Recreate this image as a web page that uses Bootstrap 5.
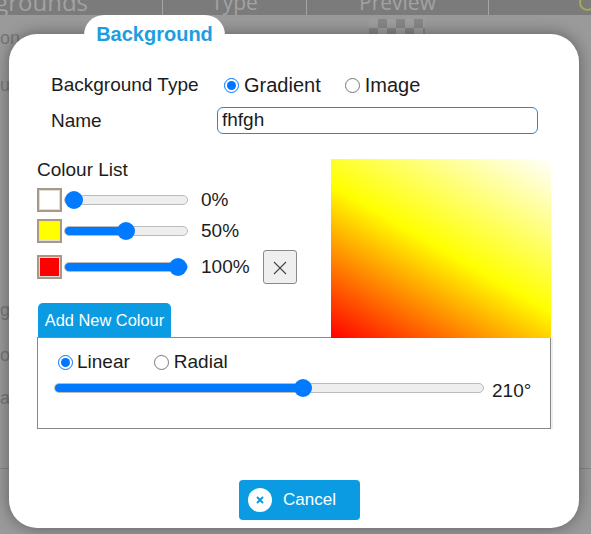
<!DOCTYPE html>
<html lang="en">
<head>
    <meta charset="UTF-8">
    <meta name="viewport" content="width=device-width, initial-scale=1.0">
    <title>Background</title>
    <link rel="stylesheet" href="https://cdn.jsdelivr.net/npm/bootstrap@5.3.0/dist/css/bootstrap.min.css">
    <style>
        html, body {
            height: 100%;
            overflow: hidden;
        }
        body {
            background-color: #9a9a9a;
            color: #1c1c1c;
            font-family: "Liberation Sans", Arial, sans-serif;
            font-size: 19px;
            line-height: 24px;
        }
        /* page behind the dialog */
        .behind-head {
            height: 15px;
            background: #7b7b7b;
            color: #a2a2a2;
            font-family: "Open Sans", sans-serif;
            font-size: 21px;
            overflow: hidden;
        }
        .behind-head > div {
            height: 15px;
            border-right: 1px solid #a5a5a5;
            text-align: center;
            line-height: 4px;
        }
        .behind-head > .head-a {
            width: 163px;
            padding-right: 74px;
            font-size: 24px;
            white-space: nowrap;
            display: flex;
            justify-content: flex-end;
        }
        .head-b { width: 144px; }
        .head-c { width: 182px; }
        .behind-text {
            color: #777;
            font-size: 18px;
            line-height: 18px;
            width: 9px;
            white-space: nowrap;
        }
        .gap-on { margin-top: 14px; }
        .gap-u { margin-top: 29px; }
        .gap-g { margin-top: 207px; }
        .gap-op { margin-top: 27px; }
        .gap-ac { margin-top: 25px; }
        .behind-line {
            position: absolute;
            left: 0;
            right: 0;
            top: 468px;
            border-top: 1px solid #858585;
        }
        .checks {
            position: absolute;
            left: 369px;
            top: 19px;
            width: 56px;
            height: 16px;
            background: repeating-conic-gradient(#878787 0 25%, #9f9f9f 0 50%) 0 0 / 18px 18px;
        }
        .plus-mark {
            position: absolute;
            left: 579px;
            top: -6px;
            width: 17px;
            height: 17px;
            border: 2px solid #a9a65a;
            border-radius: 50%;
        }
        /* dialog */
        .dlg {
            position: absolute;
            left: 9px;
            top: 34px;
            width: 570px;
            height: 494px;
            background: #fff;
            border-radius: 28px;
            box-shadow: 0 0 16px rgba(0, 0, 0, .4);
        }
        .dlg-tab {
            position: absolute;
            left: 75px;
            top: -19px;
            width: 141px;
            height: 40px;
            background: #fff;
            border-radius: 20px 20px 0 0;
            color: #1e9de0;
            font-size: 20px;
            font-weight: 700;
            line-height: 38px;
            text-align: center;
        }
        .dlg-body {
            padding: 36px 28px 0 28px;
        }
        .top-rows {
            padding-left: 14px;
            width: 501px;
        }
        .top-label {
            width: 166px;
            flex: none;
        }
        .type-row { height: 30px; margin-bottom: 7px; }
        .choice {
            display: inline-flex;
            align-items: center;
            margin: 0;
            line-height: 20px;
        }
        .choice input {
            width: 15px;
            height: 15px;
            margin: 0 5px 0 0;
        }
        .type-row .choice {
            font-size: 20px;
        }
        .type-row .choice:nth-child(2) {
            margin-left: 7px;
            margin-right: 24px;
        }
        .name-input.form-control {
            width: 321px;
            height: 27px;
            padding: 0 4px;
            border: 1px solid #1a8fd6;
            border-radius: 6px;
            font-size: 19px;
            color: #1c1c1c;
            box-shadow: none;
        }
        .mid-row {
            margin-top: 25px;
            height: 178px;
        }
        .colours { width: 294px; flex: none; }
        .list-title { line-height: 21px; margin-bottom: 4px; }
        .stop-row { height: 31px; }
        .stop-row.last { height: 34px; margin-top: 4px; }
        .swatch {
            width: 25px;
            height: 24px;
            flex: none;
            border: 2px solid #ab9786;
            box-shadow: inset 0 0 0 1px #ddd;
        }
        .range-x {
            -webkit-appearance: none;
            appearance: none;
            display: block;
            height: 18px;
            margin: 0;
            background: transparent;
        }
        .range-x::-webkit-slider-runnable-track {
            height: 10px;
            border-radius: 5px;
            border: 1px solid #bbb;
            background: linear-gradient(#007bff, #007bff) no-repeat 0 0 / var(--fill) 100%, #eee;
        }
        .range-x::-webkit-slider-thumb {
            -webkit-appearance: none;
            width: 18px;
            height: 18px;
            margin-top: -5px;
            border-radius: 50%;
            background: #007bff;
        }
        .stop-range { width: 124px; margin-left: 2px; flex: none; }
        .pct { margin-left: 13px; white-space: nowrap; }
        .del-btn.btn {
            width: 34px;
            height: 34px;
            padding: 0;
            margin-left: 13px;
            background: #efefef;
            border: 1px solid #8a8a8a;
            border-radius: 3px;
            line-height: 1;
        }
        .add-btn.btn {
            width: 133px;
            height: 34px;
            padding: 0;
            margin: 19px 0 0 1px;
            background: #0a9be3;
            border: 0;
            border-radius: 5px 5px 0 0;
            color: #fff;
            font-size: 16.4px;
            display: block;
        }
        .sample {
            width: 221px;
            height: 179px;
            background: linear-gradient(210deg, #fff 0%, #ff0 50%, #f00 100%);
        }
        .angle-box {
            width: 514px;
            height: 92px;
            padding: 14px 16px 0 16px;
            border: 1px solid #888;
            box-shadow: 2px 0 0 #eee;
        }
        .angle-box .choice { margin-right: 24px; }
        .angle-box .choice:first-child input { margin-left: 4px; margin-right: 4px; }
        .angle-range { width: 430px; flex: none; }
        .angle-row { margin-top: 7px; height: 26px; }
        .deg { margin-left: 8px; }
        .dlg-foot {
            position: absolute;
            left: 0;
            right: 0;
            bottom: 8px;
            padding-left: 11px;
        }
        .cancel-btn.btn {
            width: 121px;
            height: 40px;
            padding: 0 0 0 9px;
            background: #0a9be3;
            border: 0;
            border-radius: 4px;
            color: #fff;
            font-size: 17px;
            gap: 11px;
        }
        .cancel-dot {
            width: 24px;
            height: 24px;
            background: #fff;
            border-radius: 50%;
        }
    </style>
</head>
<body>
    <div class="behind-head d-flex">
        <div class="head-a">Backgrounds</div>
        <div class="head-b">Type</div>
        <div class="head-c">Preview</div>
    </div>
    <div class="behind-text">
        <div class="gap-on">on</div>
        <div class="gap-u">u</div>
        <div class="gap-g">g</div>
        <div class="gap-op">op</div>
        <div class="gap-ac">ac</div>
    </div>
    <div class="behind-line"></div>
    <div class="checks"></div>
    <div class="plus-mark"></div>

    <div class="dlg">
        <div class="dlg-tab">Background</div>
        <div class="dlg-body position-relative">
            <div class="top-rows">
                <div class="type-row d-flex align-items-center">
                    <div class="top-label">Background Type</div>
                    <label class="choice"><input type="radio" name="bgtype" checked>Gradient</label>
                    <label class="choice"><input type="radio" name="bgtype">Image</label>
                </div>
                <div class="d-flex align-items-center">
                    <div class="top-label">Name</div>
                    <input type="text" class="form-control name-input" value="fhfgh">
                </div>
            </div>

            <div class="mid-row d-flex">
                <div class="colours">
                    <div class="list-title">Colour List</div>
                    <div class="stop-row d-flex align-items-center">
                        <div class="swatch bg-white"></div>
                        <input type="range" class="range-x stop-range" value="0" style="--fill: 0%">
                        <span class="pct">0%</span>
                    </div>
                    <div class="stop-row d-flex align-items-center">
                        <div class="swatch" style="background: #ff0"></div>
                        <input type="range" class="range-x stop-range" value="50" style="--fill: 50%">
                        <span class="pct">50%</span>
                    </div>
                    <div class="stop-row last d-flex align-items-center">
                        <div class="swatch" style="background: #f00"></div>
                        <input type="range" class="range-x stop-range" value="100" style="--fill: 100%">
                        <span class="pct">100%</span>
                        <button type="button" class="btn del-btn">
                            <svg width="14" height="14" viewBox="0 0 14 14"><path d="M1 1 13 13M13 1 1 13" stroke="#444" stroke-width="1.1" fill="none"/></svg>
                        </button>
                    </div>
                    <button type="button" class="btn add-btn">Add New Colour</button>
                </div>
                <div class="sample"></div>
            </div>

            <div class="angle-box">
                <div class="d-flex">
                    <label class="choice"><input type="radio" name="gradtype" checked>Linear</label>
                    <label class="choice"><input type="radio" name="gradtype">Radial</label>
                </div>
                <div class="angle-row d-flex">
                    <input type="range" class="range-x angle-range" min="0" max="360" value="210" style="--fill: 58.3%">
                    <span class="deg">210°</span>
                </div>
            </div>
        </div>
        <div class="dlg-foot d-flex justify-content-center">
            <button type="button" class="btn cancel-btn d-flex align-items-center">
                <span class="cancel-dot d-flex align-items-center justify-content-center">
                    <svg width="10" height="10" viewBox="0 0 10 10"><path d="M2 2 8 8M8 2 2 8" stroke="#0a9be3" stroke-width="2" fill="none"/></svg>
                </span>
                Cancel
            </button>
        </div>
    </div>

    <script src="https://cdn.jsdelivr.net/npm/bootstrap@5.3.0/dist/js/bootstrap.bundle.min.js"></script>
</body>
</html>
